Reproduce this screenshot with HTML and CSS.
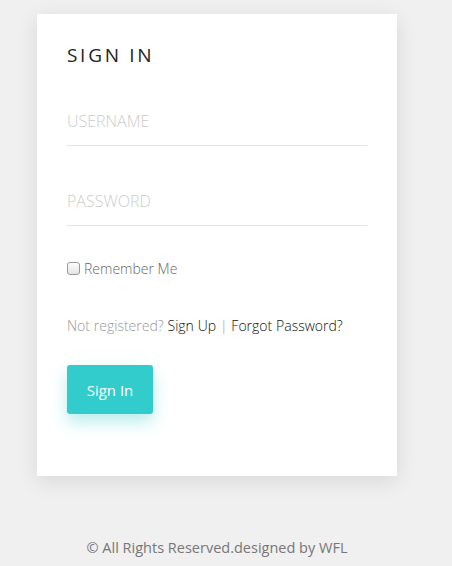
FILE: index.html
```html
<!DOCTYPE html>
<html>
<head>
<meta charset="utf-8">
<link rel="stylesheet" href="styles.css">
</head>
<body>
<div class="page">
  <div class="card">
    <h2 class="title">SIGN IN</h2>
    <form class="form">
      <input class="field" type="text" placeholder="USERNAME">
      <input class="field" type="password" placeholder="PASSWORD">
      <label class="remember"><input type="checkbox" class="check"> Remember Me</label>
      <p class="links">Not registered? <a href="#">Sign Up</a> <span class="sep">|</span> <a href="#">Forgot Password?</a></p>
      <button type="button" class="btn">Sign In</button>
    </form>
  </div>
  <p class="footer">© All Rights Reserved.designed by WFL</p>
</div>
</body>
</html>
```
FILE: styles.css
```css
html, body {
  margin: 0;
  padding: 0;
  background: #f0f0f0;
  font-family: "Open Sans", sans-serif;
}
.page {
  width: 434px;
  padding-top: 14px;
  display: flex;
  flex-direction: column;
  align-items: center;
}
.card {
  width: 300px;
  background: #fff;
  padding: 28px 30px 62px;
  box-shadow: 0 5px 20px rgba(0,0,0,0.1);
}
.title {
  margin: 0;
  font-size: 19px;
  font-weight: 400;
  letter-spacing: 2.7px;
  color: #222;
  line-height: 26px;
}
.form {
  display: flex;
  flex-direction: column;
  margin-top: 24px;
}
.field {
  border: none;
  border-bottom: 1px solid #e5e5e5;
  height: 54px;
  padding: 4px 0 0;
  box-sizing: border-box;
  font-family: "Open Sans", sans-serif;
  font-weight: 300;
  font-size: 16px;
  outline: none;
  margin-bottom: 26px;
}
.field::placeholder {
  color: #cccccc;
}
.remember {
  display: flex;
  align-items: center;
  font-size: 14px;
  font-weight: 300;
  color: #666;
  margin-top: 6px;
  height: 20px;
}
.check {
  -webkit-appearance: none;
  appearance: none;
  margin: 0 4px 0 0;
  width: 13px;
  height: 13px;
  border: 1px solid #999;
  border-radius: 3px;
  background: linear-gradient(#fdfdfd, #e4e4e4);
  box-sizing: border-box;
}
.links {
  margin: 38px 0 0;
  font-size: 14px;
  font-weight: 300;
  color: #999;
  line-height: 20px;
  word-spacing: 0.2px;
}
.links a {
  color: #111;
  text-decoration: none;
}
.sep {
  color: #999;
}
.btn {
  margin-top: 29px;
  width: 86px;
  height: 49px;
  background: #33cccc;
  color: #fff;
  border: none;
  border-radius: 3px;
  font-family: "Open Sans", sans-serif;
  font-size: 15px;
  box-shadow: 0 8px 16px rgba(51,204,204,0.35);
}
.footer {
  margin: 62px 0 0;
  font-size: 14.5px;
  color: #777;
}
```
